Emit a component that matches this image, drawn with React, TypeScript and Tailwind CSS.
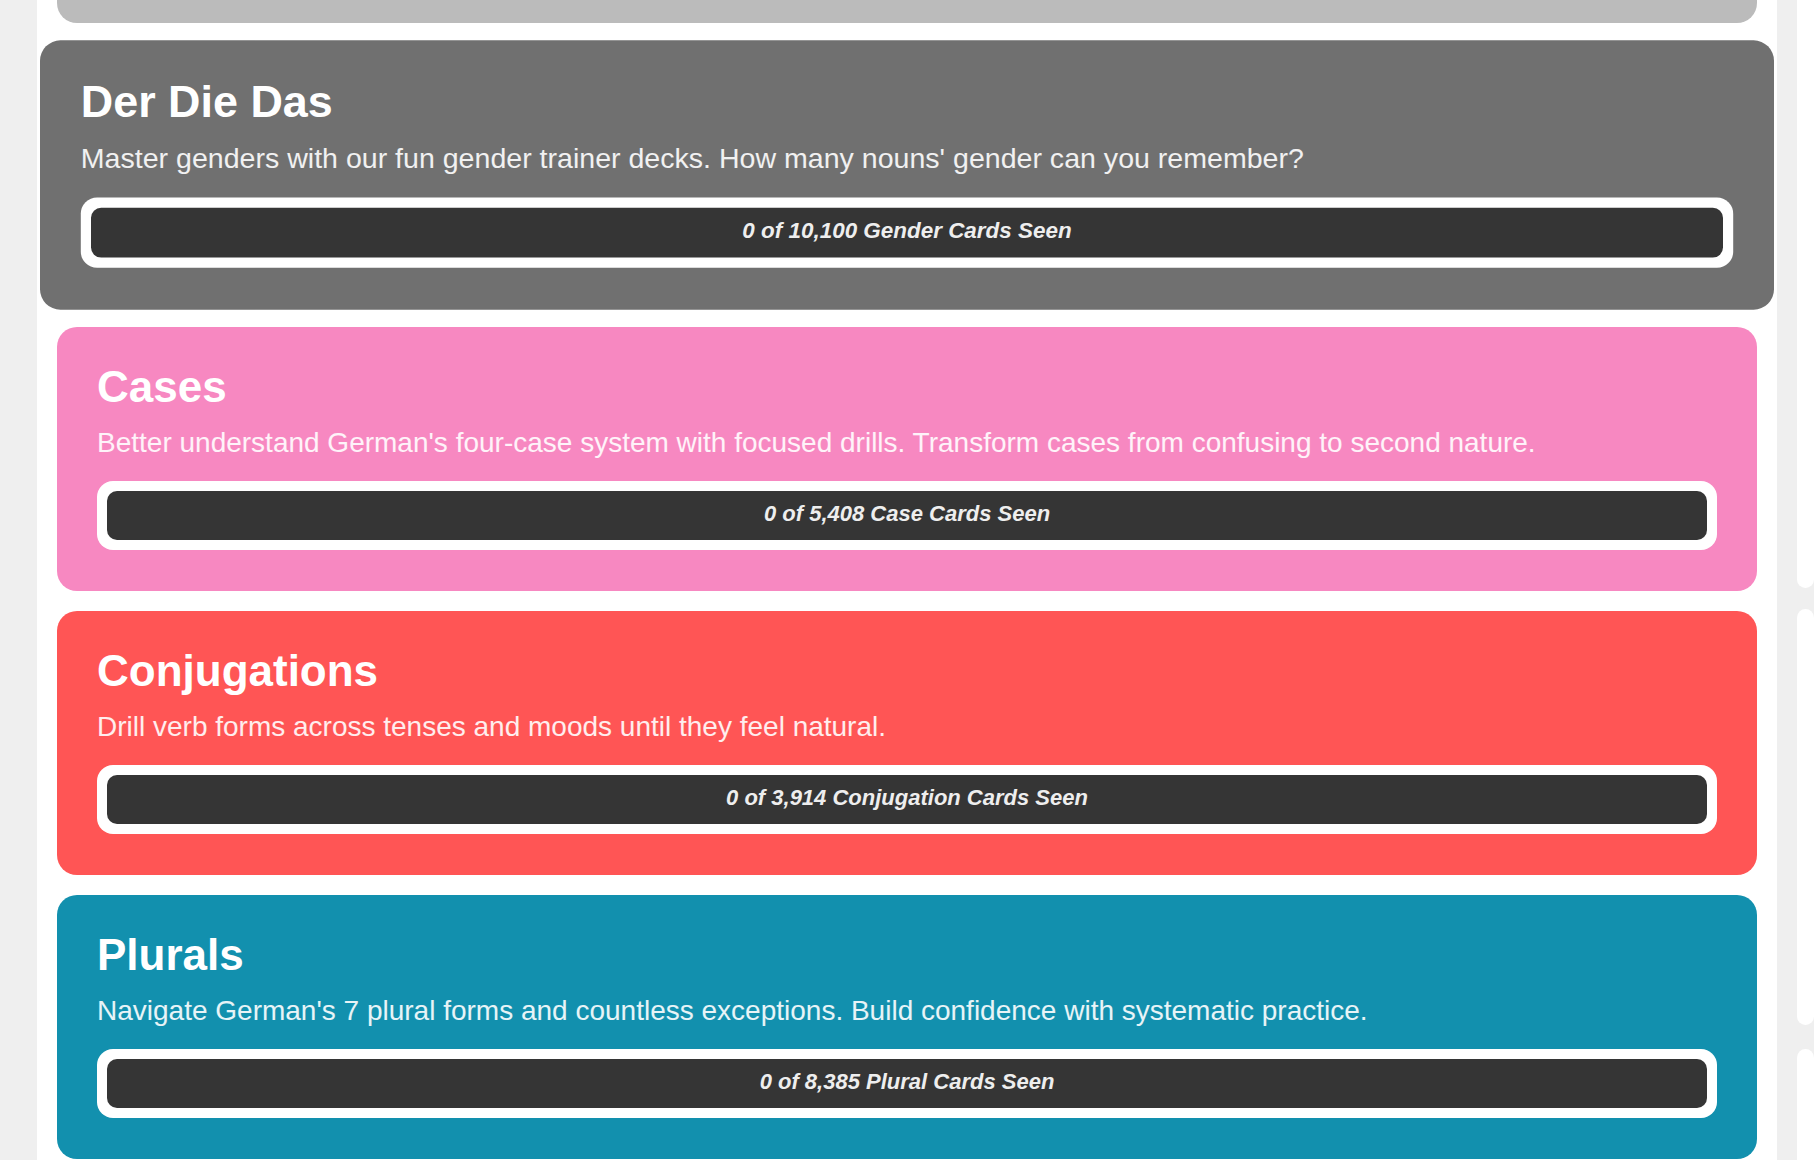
import React from "react";

type Deck = {
  title: string;
  desc: string;
  progress: string;
  bg: string;
  active?: boolean;
};

const decks: Deck[] = [
  {
    title: "Der Die Das",
    desc: "Master genders with our fun gender trainer decks. How many nouns' gender can you remember?",
    progress: "0 of 10,100 Gender Cards Seen",
    bg: "bg-[#707070]",
    active: true,
  },
  {
    title: "Cases",
    desc: "Better understand German's four-case system with focused drills. Transform cases from confusing to second nature.",
    progress: "0 of 5,408 Case Cards Seen",
    bg: "bg-[#f788c1]",
  },
  {
    title: "Conjugations",
    desc: "Drill verb forms across tenses and moods until they feel natural.",
    progress: "0 of 3,914 Conjugation Cards Seen",
    bg: "bg-[#ff5555]",
  },
  {
    title: "Plurals",
    desc: "Navigate German's 7 plural forms and countless exceptions. Build confidence with systematic practice.",
    progress: "0 of 8,385 Plural Cards Seen",
    bg: "bg-[#1290ae]",
  },
];

function DeckCard({ deck }: { deck: Deck }) {
  return (
    <div
      className={`${deck.bg} rounded-[20px] px-10 pt-[38px] pb-[41px] ${
        deck.active ? "scale-[1.02]" : ""
      }`}
    >
      <h2 className="text-[44px] leading-none font-bold text-white">{deck.title}</h2>
      <p className="mt-[16px] text-[28px] leading-[36px] text-white/90">{deck.desc}</p>
      <div className="mt-[20px] rounded-[16px] bg-white p-[10px]">
        <div className="flex h-[49px] items-center justify-center rounded-[10px] bg-[#353535] pb-[4px] text-[22px] font-bold italic text-[#eeeeee]">
          {deck.progress}
        </div>
      </div>
    </div>
  );
}

export default function App() {
  return (
    <div className="flex h-[1160px] w-full overflow-hidden bg-[#efefef] font-['Liberation_Sans',Arial,sans-serif]">
      <div className="ml-[37px] w-[1740px] shrink-0 bg-white px-5">
        <div className="-mt-[241px] flex flex-col gap-5">
          <div className="h-[264px] rounded-[20px] bg-[#bbbbbb]" />
          {decks.map((d) => (
            <DeckCard key={d.title} deck={d} />
          ))}
        </div>
      </div>
      <div className="ml-5 flex flex-1 flex-col gap-[21px]">
        <div className="-mt-[20px] h-[608px] shrink-0 rounded-[15px] bg-white" />
        <div className="h-[416px] shrink-0 rounded-[15px] bg-white" />
        <div className="mt-[3px] h-[300px] shrink-0 rounded-[15px] bg-white" />
      </div>
    </div>
  );
}
